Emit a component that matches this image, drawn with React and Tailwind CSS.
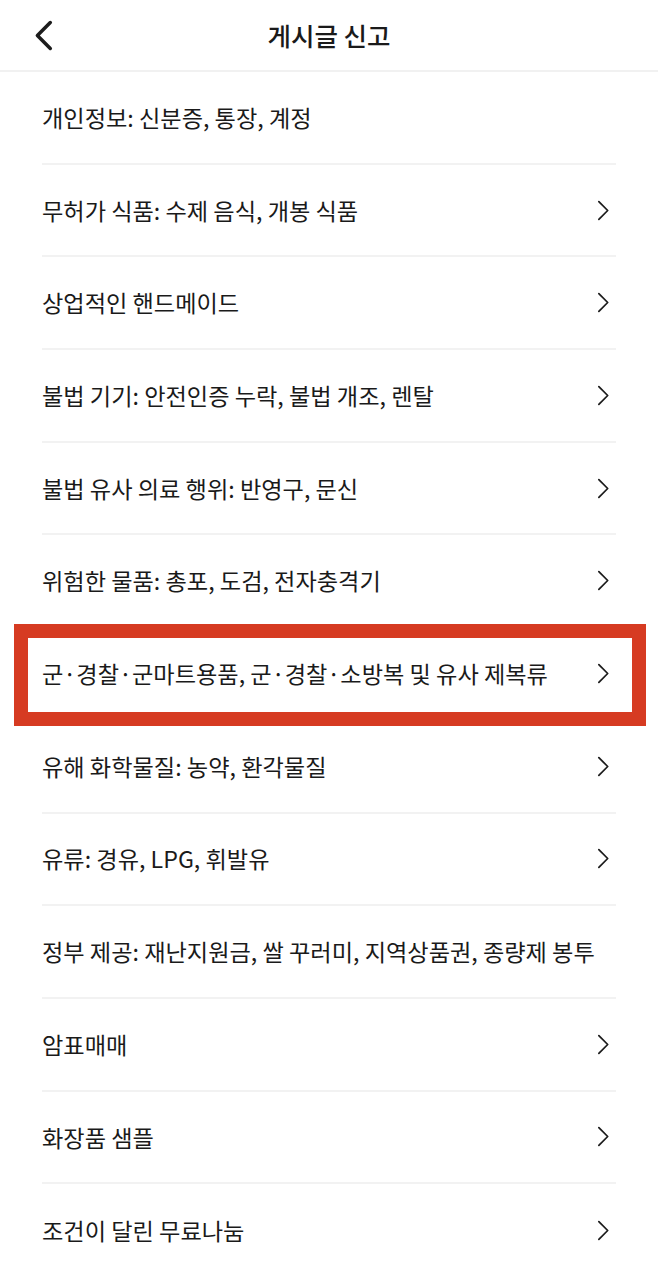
import React from "react";

const items = [
  { label: "개인정보: 신분증, 통장, 계정", arrow: false },
  { label: "무허가 식품: 수제 음식, 개봉 식품", arrow: true },
  { label: "상업적인 핸드메이드", arrow: true },
  { label: "불법 기기: 안전인증 누락, 불법 개조, 렌탈", arrow: true },
  { label: "불법 유사 의료 행위: 반영구, 문신", arrow: true },
  { label: "위험한 물품: 총포, 도검, 전자충격기", arrow: true },
  { label: "군·경찰·군마트용품, 군·경찰·소방복 및 유사 제복류", arrow: true, marked: true },
  { label: "유해 화학물질: 농약, 환각물질", arrow: true },
  { label: "유류: 경유, LPG, 휘발유", arrow: true },
  { label: "정부 제공: 재난지원금, 쌀 꾸러미, 지역상품권, 종량제 봉투", arrow: false },
  { label: "암표매매", arrow: true },
  { label: "화장품 샘플", arrow: true },
  { label: "조건이 달린 무료나눔", arrow: true },
];

function Chevron({ left = false, className = "" }) {
  return (
    <svg viewBox="0 0 14 22" className={className} fill="none">
      <path
        d={left ? "M12 1.5 L2.5 11 L12 20.5" : "M2 1.5 L11.5 11 L2 20.5"}
        stroke="#1c1c1c"
        strokeWidth={left ? 2.6 : 1.9}
        strokeLinecap="round"
        strokeLinejoin="round"
      />
    </svg>
  );
}

export default function App() {
  return (
    <div className="w-[658px] min-h-[1271px] bg-white text-[#1a1a1a] font-['Noto_Sans_CJK_KR','Noto_Sans',sans-serif]">
      <header className="h-[72px] flex items-center relative border-b-2 border-[#f1f1f1]">
        <button className="ml-[34px] w-[20px] h-[32px] flex items-center">
          <Chevron left className="w-[19px] h-[31px]" />
        </button>
        <h1 className="flex-1 text-center -ml-[54px] text-[25.5px] font-medium">
          게시글 신고
        </h1>
      </header>

      <ul>
        {items.map((item, i) => (
          <li key={i} className="relative px-[42px]">
            <div
              className={
                "h-[92.7px] flex items-center justify-between " +
                (i < items.length - 1 ? "border-b-2 border-[#f2f2f2]" : "")
              }
            >
              <span className="text-[23.2px] whitespace-nowrap">{item.label}</span>
              {item.arrow && <Chevron className="w-[13px] h-[21px] mr-[6px] shrink-0" />}
            </div>
            {item.marked && (
              <div className="absolute left-[14px] right-[12px] top-[-4px] bottom-[-5px] border-[14px] border-[#d63b22] pointer-events-none" />
            )}
          </li>
        ))}
      </ul>
    </div>
  );
}
